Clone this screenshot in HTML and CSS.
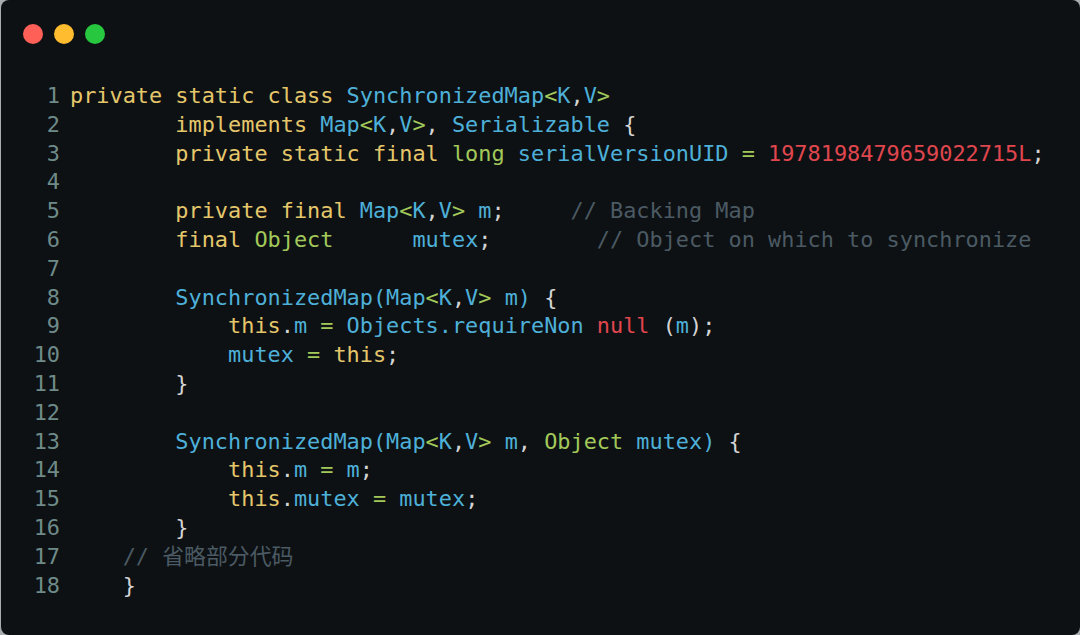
FILE: index.html
```html
<!DOCTYPE html>
<html lang="zh">
<head>
<meta charset="utf-8">
<title>SynchronizedMap</title>
<link rel="stylesheet" href="styles.css">
</head>
<body>
<div class="card">
  <div class="dots">
    <span class="dot red"></span>
    <span class="dot yellow"></span>
    <span class="dot green"></span>
  </div>
  <div class="code">
    <div class="ln"><span class="no">1</span><span class="tx"><span class="k">private static class</span> <span class="b">SynchronizedMap</span><span class="g">&lt;</span><span class="b">K</span><span class="p">,</span><span class="b">V</span><span class="g">&gt;</span></span></div>
    <div class="ln"><span class="no">2</span><span class="tx">        <span class="k">implements</span> <span class="b">Map</span><span class="g">&lt;</span><span class="b">K</span><span class="p">,</span><span class="b">V</span><span class="g">&gt;</span><span class="p">,</span> <span class="b">Serializable</span> <span class="p">{</span></span></div>
    <div class="ln"><span class="no">3</span><span class="tx">        <span class="k">private static final</span> <span class="g">long</span> <span class="b">serialVersionUID</span> <span class="g">=</span> <span class="r">1978198479659022715L</span><span class="p">;</span></span></div>
    <div class="ln"><span class="no">4</span><span class="tx"> </span></div>
    <div class="ln"><span class="no">5</span><span class="tx">        <span class="k">private final</span> <span class="b">Map</span><span class="g">&lt;</span><span class="b">K</span><span class="p">,</span><span class="b">V</span><span class="g">&gt;</span> <span class="b">m</span><span class="p">;</span>     <span class="c">// Backing Map</span></span></div>
    <div class="ln"><span class="no">6</span><span class="tx">        <span class="k">final</span> <span class="g">Object</span>      <span class="b">mutex</span><span class="p">;</span>        <span class="c">// Object on which to synchronize</span></span></div>
    <div class="ln"><span class="no">7</span><span class="tx"> </span></div>
    <div class="ln"><span class="no">8</span><span class="tx">        <span class="b">SynchronizedMap(Map</span><span class="g">&lt;</span><span class="b">K</span><span class="p">,</span><span class="b">V</span><span class="g">&gt;</span> <span class="b">m)</span> <span class="p">{</span></span></div>
    <div class="ln"><span class="no">9</span><span class="tx">            <span class="k">this</span><span class="p">.</span><span class="b">m</span> <span class="g">=</span> <span class="b">Objects.requireNon</span> <span class="r">null</span> <span class="p">(</span><span class="b">m</span><span class="p">);</span></span></div>
    <div class="ln"><span class="no">10</span><span class="tx">            <span class="b">mutex</span> <span class="g">=</span> <span class="k">this</span><span class="p">;</span></span></div>
    <div class="ln"><span class="no">11</span><span class="tx">        <span class="p">}</span></span></div>
    <div class="ln"><span class="no">12</span><span class="tx"> </span></div>
    <div class="ln"><span class="no">13</span><span class="tx">        <span class="b">SynchronizedMap(Map</span><span class="g">&lt;</span><span class="b">K</span><span class="p">,</span><span class="b">V</span><span class="g">&gt;</span> <span class="b">m</span><span class="p">,</span> <span class="g">Object</span> <span class="b">mutex)</span> <span class="p">{</span></span></div>
    <div class="ln"><span class="no">14</span><span class="tx">            <span class="k">this</span><span class="p">.</span><span class="b">m</span> <span class="g">=</span> <span class="b">m</span><span class="p">;</span></span></div>
    <div class="ln"><span class="no">15</span><span class="tx">            <span class="k">this</span><span class="p">.</span><span class="b">mutex</span> <span class="g">=</span> <span class="b">mutex</span><span class="p">;</span></span></div>
    <div class="ln"><span class="no">16</span><span class="tx">        <span class="p">}</span></span></div>
    <div class="ln"><span class="no">17</span><span class="tx">    <span class="c">// 省略部分代码</span></span></div>
    <div class="ln"><span class="no">18</span><span class="tx">    <span class="p">}</span></span></div>
  </div>
</div>
</body>
</html>
```
FILE: styles.css
```css
html, body {
  margin: 0;
  padding: 0;
}
body {
  background: #a9adb0;
  width: 1080px;
  height: 635px;
  overflow: hidden;
  padding-left: 1px;
  box-sizing: border-box;
}
.card {
  width: 1079px;
  height: 635px;
  background: #0d1114;
  border-radius: 8px;
  box-sizing: border-box;
  padding: 24px 0 0 0;
}
.dots {
  display: flex;
  gap: 11px;
  padding-left: 22px;
  height: 20px;
}
.dot {
  width: 20px;
  height: 20px;
  border-radius: 50%;
}
.red { background: #fe5f57; }
.yellow { background: #febc2e; }
.green { background: #27c840; }
.code {
  margin-top: 38px;
  font-family: "DejaVu Sans Mono", "Noto Sans CJK SC", monospace;
  font-size: 21.88px;
  line-height: 28.8px;
  color: #d4d4d4;
}
.ln {
  display: flex;
  white-space: pre;
  height: 28.8px;
}
.no {
  width: 27px;
  margin-left: 32px;
  margin-right: 10px;
  text-align: right;
  color: #6f8b89;
}
.tx {
  white-space: pre;
}
.k { color: #e5c76b; }
.b { color: #4eb0d8; }
.g { color: #a3c95a; }
.r { color: #e0464e; }
.c { color: #4b5a63; }
.p { color: #d4d4d4; }
```
